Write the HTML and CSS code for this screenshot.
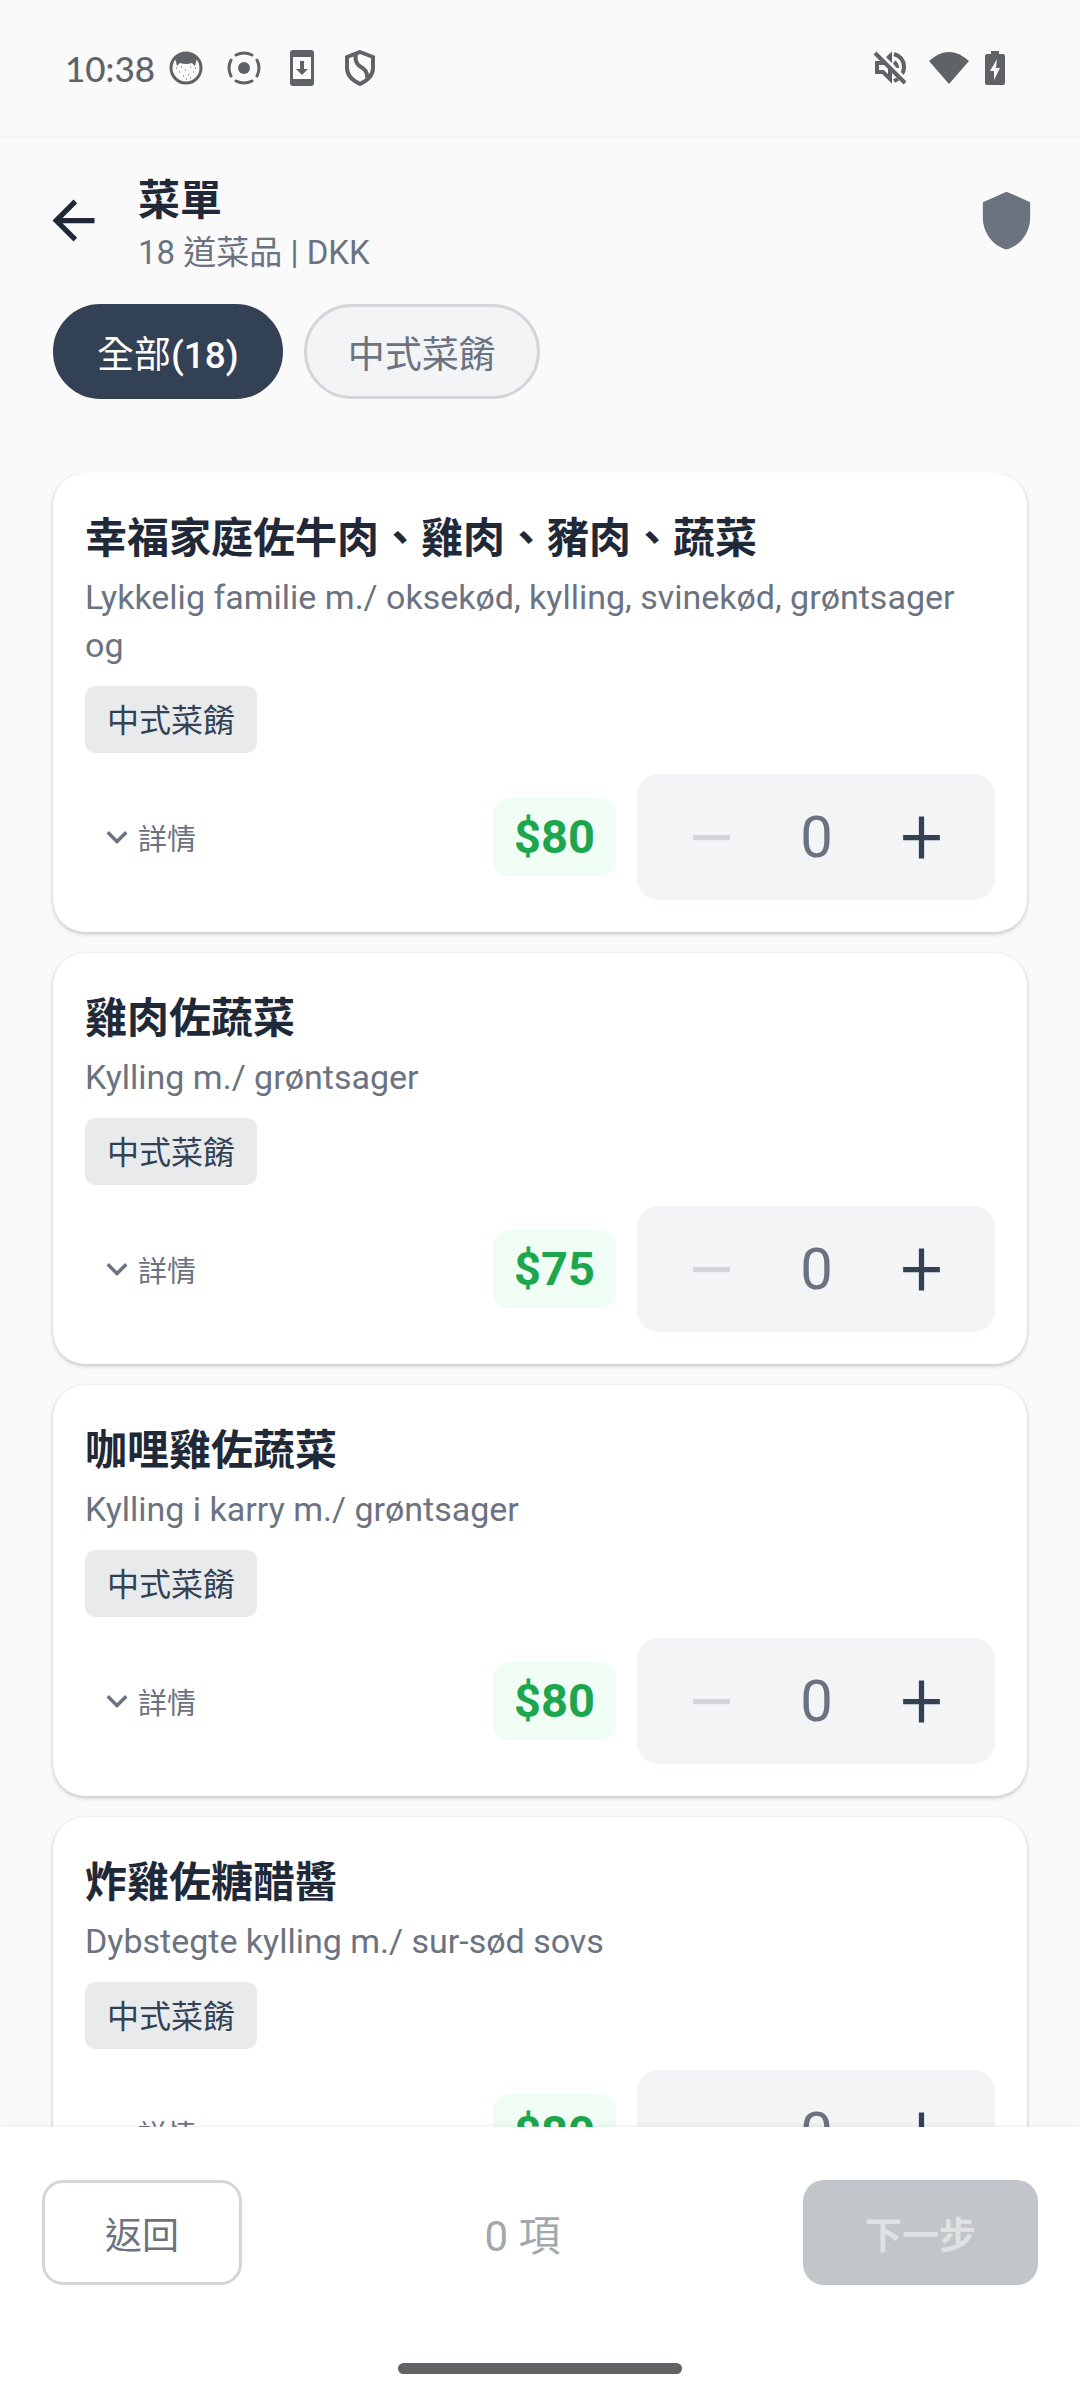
FILE: index.html
```html
<!DOCTYPE html>
<html lang="zh-Hant">

<head>
    <meta charset="UTF-8">
    <meta name="viewport" content="width=device-width, initial-scale=1.0">
    <title>菜單</title>
    <link rel="stylesheet" href="styles.css">
</head>
<body>
<svg class="sprite" aria-hidden="true">
    <symbol id="down" viewBox="0 0 24 24"><path d="M7.41 8.59L12 13.17l4.59-4.58L18 10l-6 6-6-6z"/></symbol>
    <symbol id="minus" viewBox="0 0 24 24"><path d="M19 13H5v-2h14z"/></symbol>
    <symbol id="plus" viewBox="0 0 24 24"><path d="M19 13h-6v7h-2v-7H5v-2h6V4h2v7h6z"/></symbol>
</svg>

<div class="status">
    <div class="status-left">
        <span class="time">10:38</span>
        <svg viewBox="0 0 36 36">
            <circle cx="18" cy="18" r="15" fill="none" stroke="currentColor" stroke-width="3"/>
            <path d="M7 8q11-9 22 0l-2 8-3-3q-6 2-12 0l-3 3z"/>
            <path d="M8 18h1M13 17h1M22 17h1M27 18h1M11 22h1M17 20h1M25 22h1M15 26h1M20 25h1M18 29h1M22 28h1" stroke="currentColor" stroke-width="1"/>
        </svg>
        <svg viewBox="0 0 36 36">
            <circle cx="18" cy="18" r="6"/>
            <path d="M10 5q8-4 16 0M31 10q4 8 0 16M26 31q-8 4-16 0M5 26q-4-8 0-16" fill="none" stroke="currentColor" stroke-width="3" stroke-linecap="round"/>
        </svg>
        <svg viewBox="0 0 36 36">
            <path fill-rule="evenodd" d="M9 0h18q3 0 3 3v30q0 3-3 3H9q-3 0-3-3V3q0-3 3-3zM9 7v22h18V7z"/>
            <path d="M16 11h4v8h4l-6 6-6-6h4z"/>
        </svg>
        <svg viewBox="0 0 36 36">
            <path d="M18 2L31 7v11q0 10-13 16Q5 28 5 18V7z M14 4q-2 9 5 13t6 11" fill="none" stroke="currentColor" stroke-width="4"/>
        </svg>
    </div>
    <div class="status-right">
        <svg class="mute" viewBox="0 0 36 36">
            <path d="M5 13h6l7-7v23l-7-7H5z M22 4q10 3 10 13 0 5-3 8 M22 12q3 2 3 6 M22 31l4-2" fill="none" stroke="currentColor" stroke-width="4"/>
            <path d="M5 1l32 32" stroke="#fafafa" stroke-width="4"/>
            <path d="M3 3l30 30" stroke="currentColor" stroke-width="4"/>
        </svg>
        <svg class="wifi" viewBox="0 0 40 36"><path d="M0 11Q20-7 40 11L20 34z"/></svg>
        <svg class="battery" viewBox="0 0 20 36"><path fill-rule="evenodd" d="M6 1h8v3h4q2 0 2 2v27q0 2-2 2H2q-2 0-2-2V6q0-2 2-2h4zM12 9L5 21h4v9l6-12h-4z"/></svg>
    </div>
</div>

<header class="header">
    <button class="icon-btn" aria-label="返回">
        <svg viewBox="0 0 24 24"><path d="M20 11H7.83l5.59-5.59L12 4l-8 8 8 8 1.41-1.41L7.83 13H20z"/></svg>
    </button>
    <div class="heading">
        <h1>菜單</h1>
        <p>18 道菜品 | DKK</p>
    </div>
    <button class="icon-btn shield" aria-label="過敏原">
        <svg viewBox="0 0 24 24"><path d="M12 1L3 5v6c0 5.55 3.84 10.74 9 12 5.160-1.260 9-6.450 9-12V5z"/></svg>
    </button>
</header>

<nav class="chips">
    <button class="chip current">全部<b>(18)</b></button>
    <button class="chip">中式菜餚</button>
</nav>

<main class="list">
    <article class="card">
        <h2>幸福家庭佐牛肉、雞肉、豬肉、蔬菜</h2>
        <p>Lykkelig familie m./ oksekød, kylling, svinekød, grøntsager og</p>
        <span class="tag">中式菜餚</span>
        <div class="row">
            <button class="detail"><svg><use href="#down"/></svg>詳情</button>
            <span class="price">$80</span>
            <div class="stepper">
                <button disabled aria-label="減少"><svg><use href="#minus"/></svg></button>
                <output>0</output>
                <button aria-label="增加"><svg><use href="#plus"/></svg></button>
            </div>
        </div>
    </article>
    <article class="card">
        <h2>雞肉佐蔬菜</h2>
        <p>Kylling m./ grøntsager</p>
        <span class="tag">中式菜餚</span>
        <div class="row">
            <button class="detail"><svg><use href="#down"/></svg>詳情</button>
            <span class="price">$75</span>
            <div class="stepper">
                <button disabled aria-label="減少"><svg><use href="#minus"/></svg></button>
                <output>0</output>
                <button aria-label="增加"><svg><use href="#plus"/></svg></button>
            </div>
        </div>
    </article>
    <article class="card">
        <h2>咖哩雞佐蔬菜</h2>
        <p>Kylling i karry m./ grøntsager</p>
        <span class="tag">中式菜餚</span>
        <div class="row">
            <button class="detail"><svg><use href="#down"/></svg>詳情</button>
            <span class="price">$80</span>
            <div class="stepper">
                <button disabled aria-label="減少"><svg><use href="#minus"/></svg></button>
                <output>0</output>
                <button aria-label="增加"><svg><use href="#plus"/></svg></button>
            </div>
        </div>
    </article>
    <article class="card">
        <h2>炸雞佐糖醋醬</h2>
        <p>Dybstegte kylling m./ sur-sød sovs</p>
        <span class="tag">中式菜餚</span>
        <div class="row">
            <button class="detail"><svg><use href="#down"/></svg>詳情</button>
            <span class="price">$80</span>
            <div class="stepper">
                <button disabled aria-label="減少"><svg><use href="#minus"/></svg></button>
                <output>0</output>
                <button aria-label="增加"><svg><use href="#plus"/></svg></button>
            </div>
        </div>
    </article>
</main>

<footer class="footer">
    <div class="actions">
        <button class="back">返回</button>
        <span class="count">0 項</span>
        <button class="next" disabled>下一步</button>
    </div>
    <div class="handle"></div>
</footer>
</body>
</html>
```

FILE: styles.css
```css
* {
    margin: 0;
    padding: 0;
    box-sizing: border-box;
}

body {
    height: 100vh;
    display: flex;
    flex-direction: column;
    overflow: hidden;
    background-color: #fafafa;
    color: #1f2937;
    font-family: Roboto, "Noto Sans CJK TC", sans-serif;
}

button {
    border: 0;
    background: none;
    font: inherit;
    color: inherit;
    cursor: pointer;
}

svg {
    display: block;
    fill: currentColor;
}

.sprite {
    display: none;
}

/* status bar */
.status {
    flex: none;
    display: flex;
    justify-content: space-between;
    height: 139px;
    padding: 0 75px 0 65px;
    border-bottom: 3px solid #f3f4f6;
    color: #5f6368;
}

.status-left,
.status-right {
    display: flex;
    align-items: center;
}

.status-left {
    gap: 22px;
}

.status-right {
    gap: 16px;
}

.status svg {
    width: 36px;
    height: 36px;
}

.status .mute {
    margin-right: 5px;
}

.status .wifi {
    width: 40px;
}

.status .battery {
    width: 20px;
}

.time {
    margin-right: -9px;
    font-family: Lato, sans-serif;
    font-size: 35px;
    font-weight: 500;
}

/* header */
.header {
    flex: none;
    display: flex;
    align-items: center;
    padding: 32px 42px 25px;
}

.icon-btn {
    padding-bottom: 10px;
}

.icon-btn svg {
    width: 63px;
    height: 63px;
}

.heading {
    flex: 1;
    padding-left: 33px;
}

.heading h1 {
    font-size: 42px;
    font-weight: 700;
    line-height: 60px;
}

.heading p {
    font-size: 33px;
    line-height: 44px;
    padding-bottom: 4px;
    color: #6b7280;
}

.shield {
    color: #6b7280;
}

/* category filter */
.chips {
    flex: none;
    display: flex;
    gap: 21px;
    padding: 0 53px 74px;
}

.chip {
    height: 95px;
    padding: 0 41px;
    border: 3px solid #d4d5d9;
    border-radius: 48px;
    background-color: #f3f4f6;
    font-size: 37px;
    color: #6b7280;
}

.chip.current {
    border-color: #334155;
    background-color: #334155;
    color: #ffffff;
}

.chip b {
    font-weight: 500;
}

/* dishes */
.list {
    flex: 1;
    min-height: 0;
    display: flex;
    flex-direction: column;
    gap: 21px;
    padding: 0 53px;
    overflow: hidden;
}

.card {
    flex: none;
    padding: 32px;
    border-radius: 32px;
    background-color: #ffffff;
    box-shadow: 0 2px 4px rgba(0, 0, 0, .2), 0 0 3px rgba(0, 0, 0, .06);
}

.card h2 {
    font-size: 42px;
    font-weight: 700;
    line-height: 68px;
}

.card p {
    margin-bottom: 17px;
    font-size: 34px;
    line-height: 48px;
    color: #6b7280;
}

.tag {
    display: block;
    width: fit-content;
    padding: 4px 22px 0;
    border-radius: 10px;
    background-color: #e9eaec;
    font-size: 32px;
    line-height: 63px;
    color: #334155;
}

.row {
    display: flex;
    align-items: center;
    gap: 21px;
    margin-top: 21px;
}

.detail {
    display: flex;
    align-items: center;
    margin-right: auto;
    padding: 0 11px;
    font-size: 29px;
    color: #6b7280;
}

.detail svg {
    width: 42px;
    height: 42px;
}

.price {
    padding: 0 21px;
    border-radius: 16px;
    background-color: #f0fdf4;
    font-size: 47px;
    font-weight: 700;
    line-height: 78px;
    color: #1da64d;
}

.stepper {
    display: grid;
    grid-template-columns: repeat(3, 105px);
    align-items: center;
    height: 126px;
    padding: 0 21px 0 22px;
    border-radius: 21px;
    background-color: #f3f4f6;
    color: #334155;
}

.stepper button {
    display: grid;
    place-items: center;
    height: 105px;
}

.stepper button:disabled {
    color: #d1d5db;
}

.stepper svg {
    width: 63px;
    height: 63px;
}

.stepper output {
    font-size: 58px;
    text-align: center;
    color: #6b7280;
}

/* bottom bar */
.footer {
    position: relative;
    flex: none;
    padding: 53px 42px 26px;
    background-color: #ffffff;
    box-shadow: 0 0 8px rgba(0, 0, 0, .08);
}

.actions {
    display: flex;
    align-items: center;
    justify-content: space-between;
}

.actions button {
    height: 105px;
    border-radius: 21px;
    font-size: 37px;
}

.actions .back {
    padding: 0 60px;
    border: 3px solid #d4d5d9;
    color: #6b7280;
}

.actions .next {
    padding: 0 62px;
    background-color: #c1c6ca;
    font-weight: 700;
    color: #e0e1e2;
}

.count {
    font-size: 42px;
    color: #a1a9ae;
}

.handle {
    width: 284px;
    height: 11px;
    margin: 78px auto 0;
    border-radius: 6px;
    background-color: #606266;
}
```
